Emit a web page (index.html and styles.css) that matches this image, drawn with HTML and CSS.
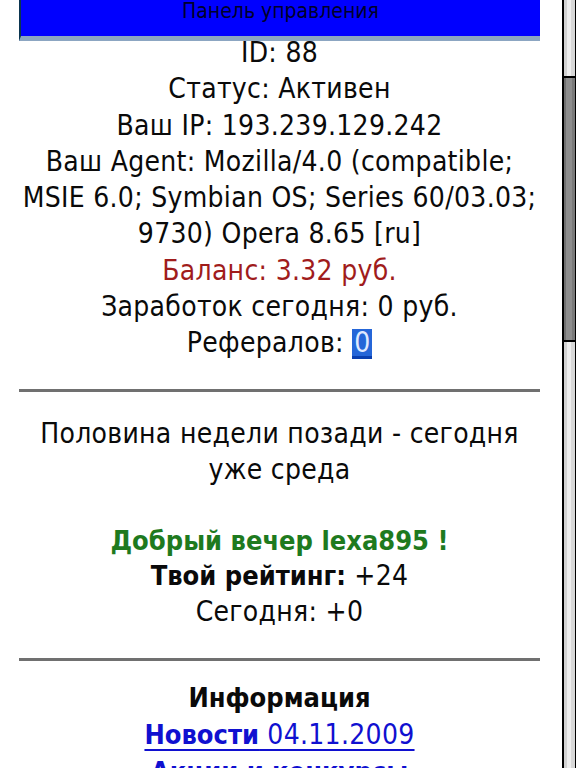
FILE: index.html
```html
<!DOCTYPE html>
<html lang="ru">
<head>
<meta charset="utf-8">
<title>Панель управления</title>
<link rel="stylesheet" href="styles.css">
</head>
<body>
<div class="screen">
  <div class="page">
    <div class="topbar"><span class="topbar-title">Панель управления</span></div>
    <div class="info">
      <p>ID: 88</p>
      <p>Статус: Активен</p>
      <p>Ваш IP: 193.239.129.242</p>
      <p>Ваш Agent: Mozilla/4.0 (compatible;<br>MSIE 6.0; Symbian OS; Series 60/03.03;<br>9730) Opera 8.65 [ru]</p>
      <p class="balance">Баланс: 3.32 руб.</p>
      <p>Заработок сегодня: 0 руб.</p>
      <p>Рефералов: <a class="focus-link" href="#">0</a></p>
    </div>
    <div class="sep"></div>
    <div class="greeting">
      <p>Половина недели позади - сегодня<br>уже среда</p>
      <p class="blank">&nbsp;</p>
      <p class="hello">Добрый вечер lexa895 !</p>
      <p><b class="strong">Твой рейтинг:</b> +24</p>
      <p>Сегодня: +0</p>
    </div>
    <div class="sep sep-low"></div>
    <div class="menu">
      <p class="menu-title">Информация</p>
      <p><a class="menu-link" href="#"><b class="strong">Новости</b> 04.11.2009</a></p>
      <p><a class="menu-link" href="#"><b class="strong">Акции и конкурсы</b></a></p>
    </div>
  </div>
  <div class="scrollbar">
    <div class="thumb"></div>
  </div>
</div>
</body>
</html>
```
FILE: styles.css
```css
html, body {
  margin: 0;
  padding: 0;
  background: #ffffff;
}
body {
  font-family: "DejaVu Sans Condensed", "DejaVu Sans", sans-serif;
  color: #0a0a0a;
}
.screen {
  display: flex;
  width: 576px;
  height: 768px;
  overflow: hidden;
}
.page {
  margin-left: 19px;
  width: 521px;
  flex: none;
  text-align: center;
}
p {
  margin: 0;
}
.topbar {
  background: #0000ff;
  border-left: 2px solid #0b3550;
  box-sizing: border-box;
  border-bottom: 5px solid #8ca6c2;
  height: 41px;
  line-height: 22px;
}
.topbar-title {
  font-size: 21px;
  color: #00002a;
}
.info,
.greeting,
.menu {
  font-size: 28px;
  letter-spacing: 0.3px;
}
.info {
  margin-top: -6px;
  line-height: 36.25px;
}
.balance {
  color: #a01c1c;
}
.focus-link {
  display: inline-block;
  color: #dfe9ff;
  background: #2566d8;
  text-decoration: none;
  border-bottom: 3px solid #0a3fb0;
  line-height: 27px;
  padding: 0 2px;
  letter-spacing: 0;
}
.sep {
  height: 3px;
  background: #707070;
  margin-top: 28px;
}
.greeting {
  margin-top: 24px;
  line-height: 35.5px;
}
.hello,
.strong,
.menu-title {
  font-weight: bold;
  font-size: 27px;
  letter-spacing: 0;
}
.hello {
  color: #1e7a1e;
}
.sep-low {
  margin-top: 29px;
}
.menu {
  margin-top: 18px;
  line-height: 37px;
}
.menu-link {
  color: #1010d0;
  text-decoration: underline;
  text-decoration-thickness: 2px;
  text-underline-offset: 5px;
}
.scrollbar {
  margin-left: auto;
  width: 11px;
  height: 768px;
  border-left: 2px solid #000000;
  border-right: 1px solid #000000;
  background: linear-gradient(to right, #d2d2d2 0, #d2d2d2 3px, #eeeeee 3px, #eeeeee 7px, #d8d8d8 7px);
  flex: none;
}
.thumb {
  margin-top: 76px;
  height: 262px;
  border-top: 2px solid #000000;
  border-bottom: 2px solid #000000;
  background: linear-gradient(to right, #707070 0, #707070 2px, #8e8e8e 2px, #8e8e8e 8px, #7a7a7a 8px);
}
```
